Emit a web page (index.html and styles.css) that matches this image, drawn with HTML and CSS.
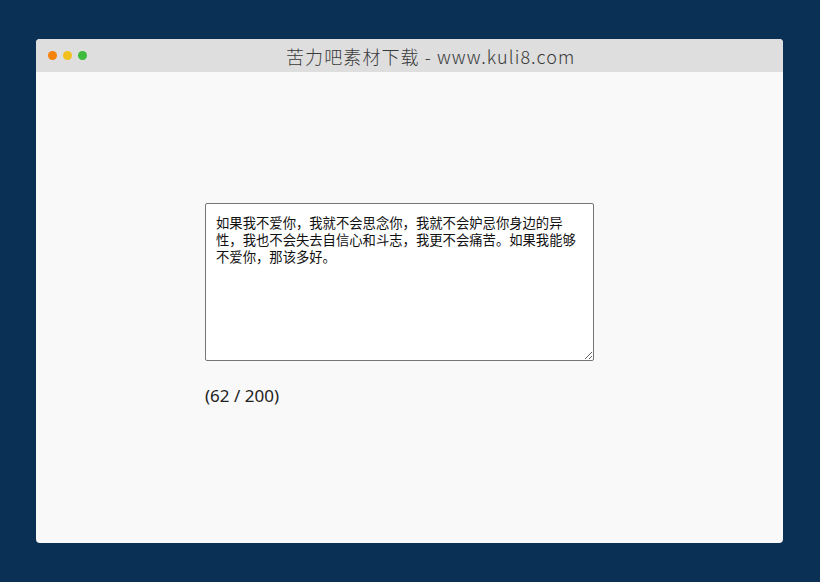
FILE: index.html
```html
<!DOCTYPE html>
<html lang="zh-CN">
<head>
    <meta charset="UTF-8">
    <title>苦力吧素材下载 - www.kuli8.com</title>
    <link rel="stylesheet" href="styles.css">
</head>
<body>
    <div class="window">
        <div class="title-bar">
            <div class="dots">
                <span class="dot orange"></span>
                <span class="dot yellow"></span>
                <span class="dot green"></span>
            </div>
            <div class="title">苦力吧素材下载 - www.kuli8.com</div>
        </div>
        <div class="content">
            <textarea class="message" id="message" maxlength="200">如果我不爱你，我就不会思念你，我就不会妒忌你身边的异性，我也不会失去自信心和斗志，我更不会痛苦。如果我能够不爱你，那该多好。</textarea>
            <p class="counter">(<span id="count">62</span> / 200)</p>
        </div>
    </div>
</body>
</html>
```

FILE: styles.css
```css
/* CSS */
html, body {
    margin: 0;
    height: 100%;
}

body {
    background-color: #0b3055;
    padding: 39px 37px 39px 36px;
    box-sizing: border-box;
    font-family: "Noto Sans", "Noto Sans CJK SC", sans-serif;
}

.window {
    height: 100%;
    display: flex;
    flex-direction: column;
    border-radius: 4px;
    overflow: hidden;
    background-color: #f9f9f9;
}

.title-bar {
    height: 33px;
    background-color: #dedede;
    display: flex;
    align-items: center;
    padding: 0 12px;
}

.dots {
    display: flex;
    gap: 6px;
    width: 150px;
}

.dot {
    width: 9px;
    height: 9px;
    border-radius: 50%;
}

.orange { background-color: #f5820d; }
.yellow { background-color: #f2c01c; }
.green  { background-color: #3cbb3c; }

.title {
    margin-left: 88px;
    font-family: "Noto Sans CJK SC", sans-serif;
    font-size: 18px;
    font-weight: 300;
    color: #3a3a3a;
    letter-spacing: 1.1px;
}

.content {
    flex: 1;
    padding: 131px 0 0 169px;
}

.message {
    display: block;
    width: 389px;
    height: 158px;
    box-sizing: border-box;
    padding: 10px 10px;
    border: 1px solid #767676;
    border-radius: 2px;
    background-color: #fff;
    font-family: "Noto Sans CJK SC", sans-serif;
    font-size: 13.33px;
    line-height: 17px;
    color: #111;
}

.counter {
    margin: 24px 0 0;
    font-size: 17px;
    line-height: 22px;
    color: #222;
}
```
